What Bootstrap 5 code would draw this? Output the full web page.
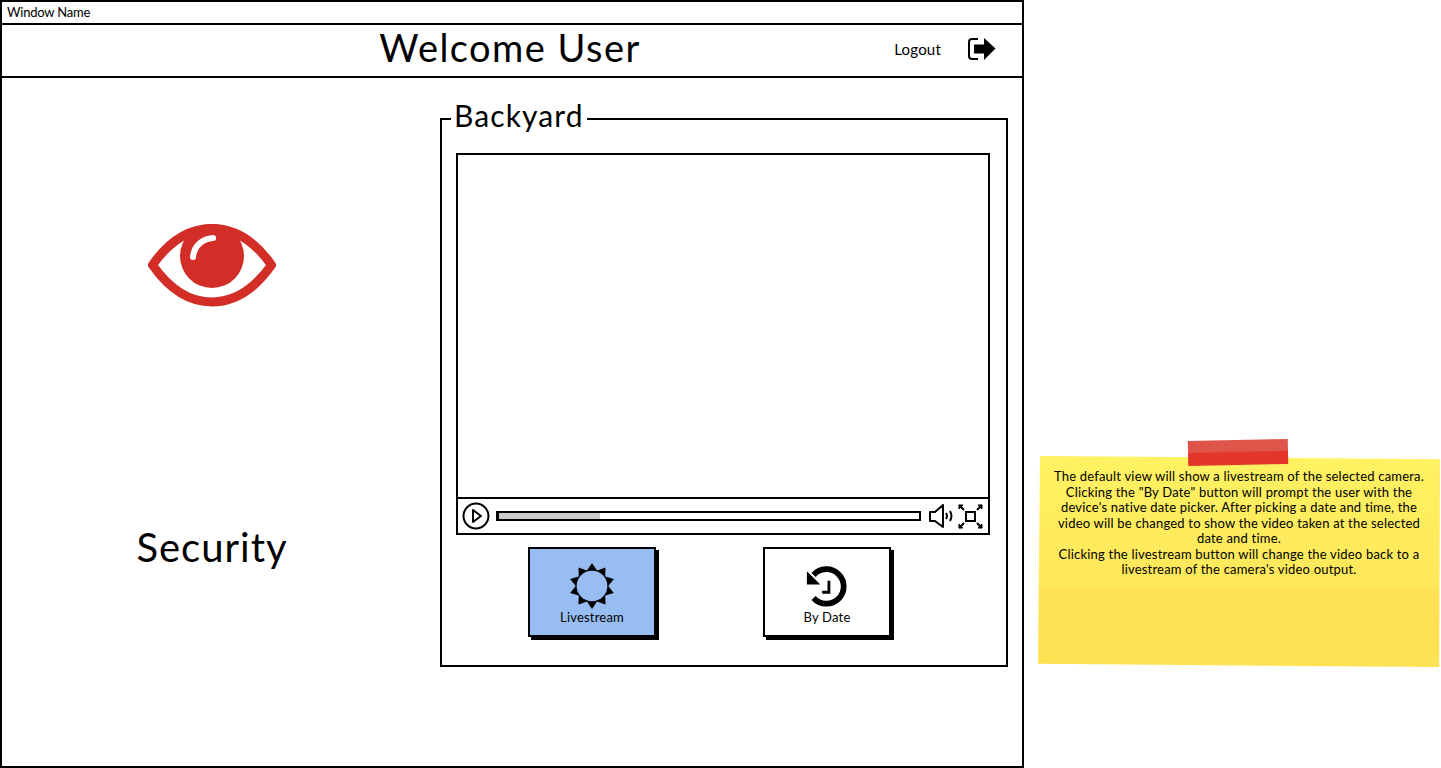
<!DOCTYPE html>
<html lang="en">
<head>
  <meta charset="UTF-8" />
  <meta name="viewport" content="width=device-width, initial-scale=1" />
  <title>Security - Backyard</title>
  <link href="https://cdn.jsdelivr.net/npm/bootstrap@5.3.2/dist/css/bootstrap.min.css" rel="stylesheet" />
  <style>
    body { font-family: "Lato", "Noto Sans", sans-serif; color: #000; background: #fff; }
    .app-window { width: 1024px; height: 768px; border: 2px solid #000; flex: none; }
    .title-bar { height: 23px; padding-left: 5px; font-size: 13px; line-height: 21px; letter-spacing: -.2px; border-bottom: 2px solid #000; }
    .app-header { display: grid; grid-template-columns: 1fr auto 1fr; height: 53px; align-items: center; border-bottom: 2px solid #000; }
    .app-header h1 { font: 400 38px/1 "Lato", sans-serif; margin: 0; padding: 0 4px 7px 0; letter-spacing: 1.45px; }
    .logout-box { justify-self: end; padding: 0 25px 3px 0; gap: 26px; font-size: 15px; letter-spacing: .2px; }
    .side-col { width: 420px; padding-top: 146px; }
    .side-title { font-size: 40px; line-height: 46px; margin-top: 217px; letter-spacing: 1px; }
    .cam-col { padding-left: 18px; padding-top: 20px; }
    .cam-box { width: 568px; height: 569px; border: 2px solid #000; padding: 0 16px 0 14px; }
    .cam-box legend { float: none; width: auto; margin: 0 0 13px -5px; padding: 0 3px 8px; font-size: 30px; line-height: 34px; letter-spacing: 1.1px; }
    .video-frame { height: 382px; border: 2px solid #000; }
    .video-bar { height: 36px; border-top: 2px solid #000; padding: 0 5px 0 4px; }
    .seek-track { width: 426px; height: 10px; margin-left: 6px; border: 2px solid #000; border-left-width: 3px; background: #fff; }
    .seek-fill { height: 100%; background: #c9c9c9; }
    .mode-row { gap: 107px; padding: 12px 0 0 72px; }
    .mode-btn { width: 128px; height: 90px; padding: 14px 0 0; border: 2px solid #000; border-radius: 0; box-shadow: 3px 3px 0 #000; font-size: 13px; line-height: 16px; letter-spacing: .2px; color: #000; background: #fff; }
    .mode-btn.is-on { background: #97bdf3; }
    .note-wrap { width: 402px; margin: 440px 0 0 14px; }
    .note-paper { height: 211px; margin-top: 16px; padding: 13px 12px 0; font-size: 13px; line-height: 15.5px; letter-spacing: .2px; text-align: center; background: linear-gradient(#fff263, #ffe75a 62%, #ffe253 63%, #ffe253); clip-path: polygon(0.5% 0, 100% 1.5%, 99.8% 100%, 0 98.5%); }
    .note-tape { position: absolute; z-index: 1; left: 150px; top: 0; width: 100px; height: 25px; transform: rotate(-1.2deg); background: linear-gradient(#e0554a 45%, #e3352a 50%); }
  </style>
</head>
<body class="d-flex m-0">
  <!-- ventana principal -->
  <main class="app-window d-flex flex-column">
    <div class="title-bar">Window Name</div>
    <header class="app-header">
      <span></span>
      <h1>Welcome User</h1>
      <div class="logout-box d-flex align-items-center">
        <span>Logout</span>
        <svg width="30" height="24" viewBox="0 0 30 24" aria-hidden="true">
          <path d="M11 2H5Q2 2 2 5V19Q2 22 5 22H11" fill="none" stroke="#000" stroke-width="2"/>
          <path d="M7 7.500H17V1L28.500 11.500L17 23V16.500H7Z" fill="#000"/>
        </svg>
      </div>
    </header>

    <div class="d-flex flex-grow-1">
      <section class="side-col d-flex flex-column align-items-center">
        <svg width="128" height="83" viewBox="0 0 128 83" aria-hidden="true">
          <path d="M4.500 41C22 16 42 4.500 64 4.500C86 4.500 106 16 123.500 41C106 66 86 78 64 78C42 78 22 66 4.500 41Z" fill="#fff" stroke="#d32d27" stroke-width="9" stroke-linejoin="round"/>
          <circle cx="64" cy="32" r="32" fill="#d32d27"/>
          <path d="M45 33C46 22 54 15 65 14" fill="none" stroke="#fff" stroke-width="6" stroke-linecap="round"/>
        </svg>
        <div class="side-title">Security</div>
      </section>

      <section class="cam-col">
        <fieldset class="cam-box">
          <legend>Backyard</legend>
          <div class="video-frame d-flex flex-column">
            <div class="flex-grow-1"></div>
            <div class="video-bar d-flex align-items-center">
              <svg width="28" height="28" viewBox="0 0 28 28" aria-hidden="true">
                <circle cx="14" cy="14" r="12.500" fill="none" stroke="#000" stroke-width="2"/>
                <path d="M11 8L19 14L11 20Z" fill="none" stroke="#000" stroke-width="2" stroke-linejoin="round"/>
              </svg>
              <div class="seek-track"><div class="seek-fill" style="width: 24%"></div></div>
              <svg class="ms-2" width="25" height="25" viewBox="0 0 25 25" aria-hidden="true">
                <path d="M1 8H6L14 1V23L6 17H1Z" fill="#fff" stroke="#000" stroke-width="2" stroke-linejoin="round"/>
                <path d="M17 9Q19 12 17 15M21 7Q24 12 21 17" fill="none" stroke="#000" stroke-width="2"/>
              </svg>
              <svg class="ms-1" width="25" height="25" viewBox="0 0 25 25" aria-hidden="true">
                <rect x="8" y="8" width="9" height="9" fill="none" stroke="#000" stroke-width="2"/>
                <path d="M1 1L6 6M24 1L19 6M1 24L6 19M24 24L19 19" stroke="#000" stroke-width="2"/>
                <path d="M1 1H5L1 5ZM24 1H20L24 5ZM1 24H5L1 20ZM24 24H20L24 20Z" fill="#000" stroke="#000"/>
              </svg>
            </div>
          </div>
          <div class="mode-row d-flex">
            <button type="button" class="btn mode-btn is-on d-flex flex-column align-items-center">
              <svg width="46" height="46" viewBox="0 0 48 48" aria-hidden="true">
                <polygon fill="#000" points="24,0 29.300,7.800 38.100,4.600 37.800,14 46.800,16.600 41,24 46.800,31.400 37.800,34 38.100,43.400 29.300,40.200 24,48 18.700,40.200 9.900,43.400 10.200,34 1.200,31.400 7,24 1.200,16.600 10.200,14 9.900,4.600 18.700,7.800"/>
                <circle cx="24" cy="24" r="16" fill="#97bdf3"/>
              </svg>
              <span>Livestream</span>
            </button>
            <button type="button" class="btn mode-btn d-flex flex-column align-items-center">
              <svg width="46" height="46" viewBox="0 0 48 48" aria-hidden="true">
                <path d="M10 12.500A18 18 0 1 1 10 36.500" fill="none" stroke="#000" stroke-width="6"/>
                <path d="M3 8.500V22.500H17Z" fill="#000"/>
                <path d="M26 18.500V30.500H19" fill="none" stroke="#000" stroke-width="3"/>
              </svg>
              <span>By Date</span>
            </button>
          </div>
        </fieldset>
      </section>
    </div>
  </main>

  <!-- nota -->
  <aside class="note-wrap position-relative flex-none">
    <div class="note-tape"></div>
    <div class="note-paper">
      The default view will show a livestream of the selected camera.<br />
      Clicking the "By Date" button will prompt the user with the device's native date picker. After picking a date and time, the video will be changed to show the video taken at the selected date and time.<br />
      Clicking the livestream button will change the video back to a livestream of the camera's video output.
    </div>
  </aside>
</body>
</html>
